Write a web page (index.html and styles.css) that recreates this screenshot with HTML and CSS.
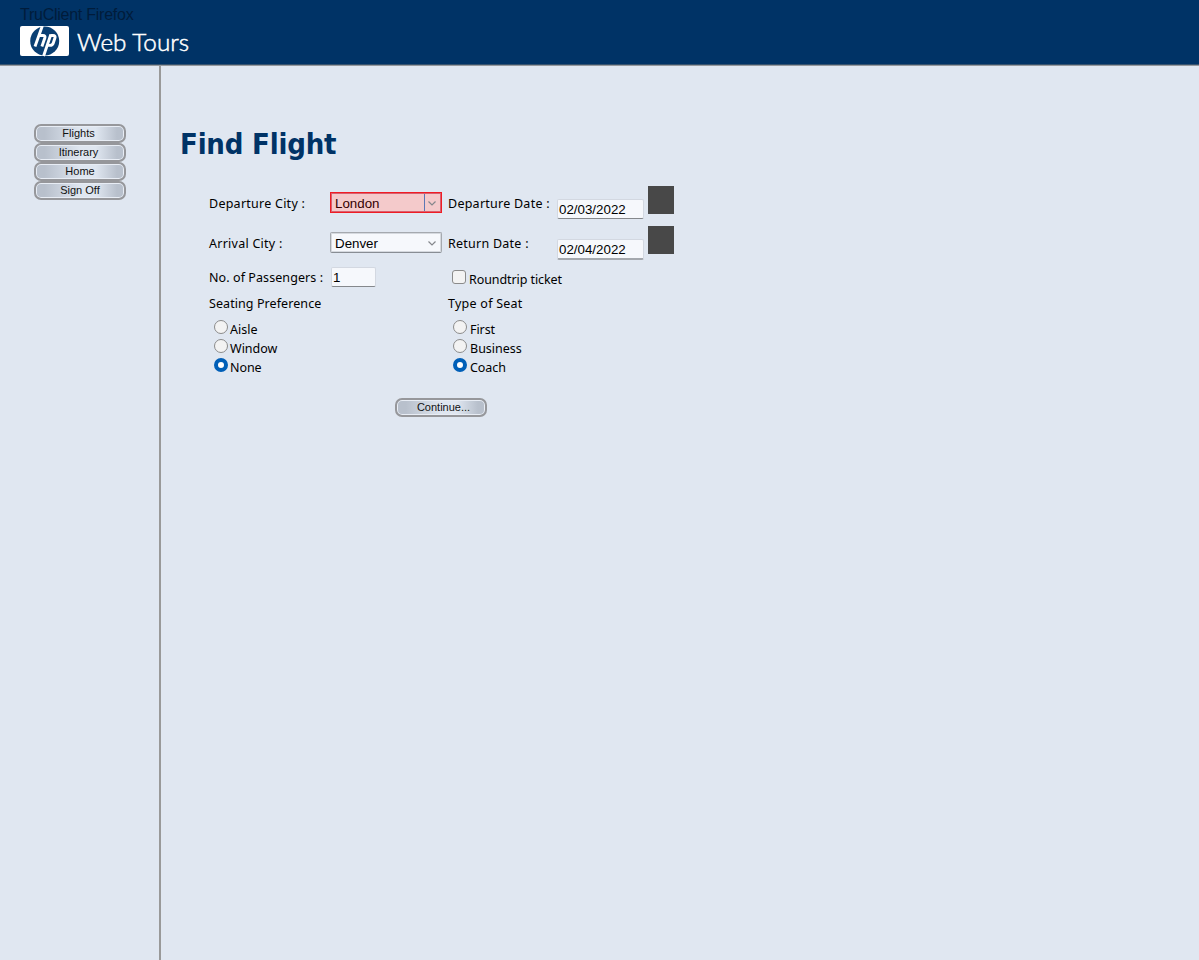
FILE: index.html
```html
<!DOCTYPE html>
<html lang="en">
<head>
<meta charset="utf-8">
<title>Web Tours</title>
<link rel="stylesheet" href="styles.css">
</head>
<body>
<header class="banner">
  <div class="script-name">TruClient Firefox</div>
  <svg class="logo" width="180" height="32" viewBox="0 0 180 32">
    <rect x="0" y="0" width="49" height="30" rx="2" fill="#fff"/>
    <circle cx="24.700" cy="15" r="14.500" fill="#0a3f73"/>
    <path d="M22.300 0 15 20.500M19.300 9.500H23q2.600 0 1.800 2.500L21.900 20.500M30.800 8.500 23.600 30M30.500 9.500H33q2.700 0 1.900 2.500l-1.600 5q-.8 2.400-3.300 2.400h-2.300" fill="none" stroke="#fff" stroke-width="2.900"/>
    <text class="brand" x="57" y="25" textLength="112" lengthAdjust="spacingAndGlyphs">Web Tours</text>
  </svg>
</header>
<div class="page">
  <nav class="side">
    <button class="pill"><span class="nudge">Flights</span></button>
    <button class="pill"><span class="nudge">Itinerary</span></button>
    <button class="pill">Home</button>
    <button class="pill">Sign Off</button>
  </nav>
  <main class="content">
    <h1 class="title">Find Flight</h1>
    <form class="form">
      <div class="row trip">
        <span class="label wide">Departure City :</span>
        <span class="select active">London<svg class="arrow" width="8" height="5" viewBox="0 0 8 5"><path d="M.5.5 4 4 7.500.5"/></svg></span>
        <span class="label wide">Departure Date :</span>
        <span class="field date">02/03/2022</span>
        <span class="calendar"></span>
      </div>
      <div class="row trip">
        <span class="label wide">Arrival City :</span>
        <span class="select">Denver<svg class="arrow" width="8" height="5" viewBox="0 0 8 5"><path d="M.5.5 4 4 7.500.5"/></svg></span>
        <span class="label wide">Return Date :</span>
        <span class="field date return">02/04/2022</span>
        <span class="calendar"></span>
      </div>
      <div class="row passengers">
        <span class="label pass">No. of Passengers :</span>
        <span class="field count">1</span>
        <span class="option"><i class="check"></i><span class="label snug">Roundtrip ticket</span></span>
      </div>
      <div class="row choices">
        <div class="group">
          <span class="label pass">Seating Preference</span>
          <div class="option first-option"><i class="radio"></i><span class="label">Aisle</span></div>
          <div class="option"><i class="radio"></i><span class="label">Window</span></div>
          <div class="option"><i class="radio on"></i><span class="label snug">None</span></div>
        </div>
        <div class="group">
          <span class="label wide">Type of Seat</span>
          <div class="option first-option"><i class="radio"></i><span class="label snug">First</span></div>
          <div class="option"><i class="radio"></i><span class="label">Business</span></div>
          <div class="option"><i class="radio on"></i><span class="label snug">Coach</span></div>
        </div>
      </div>
      <button class="pill continue" type="button">Continue...</button>
    </form>
  </main>
</div>
</body>
</html>
```
FILE: styles.css
```css
* { box-sizing: border-box; }
body { margin: 0; height: 960px; overflow: hidden; display: flex; flex-direction: column; background: #e0e7f1; color: #000; font: 12.500px/19px "Noto Sans", sans-serif; }
.banner { flex: none; height: 66px; padding: 6px 20px 0; background: #036; border-bottom: 1px solid #96999d; box-shadow: inset 0 -1px #36536f; }
.script-name { height: 20px; font: 16px/18px "Liberation Sans", sans-serif; letter-spacing: -.25px; color: #001c3b; }
.logo { display: block; }
.brand { font: 300 24px Lato, sans-serif; fill: #fff; stroke: #fff; stroke-width: .5px; }
.page { flex: 1; display: flex; }
.side { width: 161px; padding: 58px 0 0 34px; border-right: 2px solid #999; display: flex; flex-direction: column; }
.pill { flex: none; width: 92px; height: 19px; padding: 0 0 1px; border: 2px solid #96979b; border-radius: 7px; background: linear-gradient(90deg, #b8c0cc 10%, #dfe6f0 50%, #dfe6f0 68%, #b8c0cc 92%); box-shadow: inset 0 0 0 1px #e8edf5; font: 11px/14px "Liberation Sans", sans-serif; color: #111; }
.nudge { margin-right: 3px; }
.content { padding: 58px 0 0 19px; }
.title { margin: 0; height: 62px; padding-top: 1px; font: bold 29px/38px "DejaVu Sans Condensed", "DejaVu Sans", sans-serif; font-stretch: condensed; letter-spacing: -.2px; color: #036; white-space: nowrap; }
.form { padding-left: 29px; }
.row { display: grid; white-space: nowrap; }
.wide { letter-spacing: .25px; }
.pass { letter-spacing: .08px; }
.snug { letter-spacing: -.08px; }
.trip { grid-template-columns: 121px 118px 109px 91px 26px; height: 40px; }
.trip .label { padding-top: 8px; }
.select { display: flex; align-items: center; justify-content: space-between; width: 112px; height: 21px; margin-top: 6px; padding: 1px 5px 0 4px; border: 1px solid #a5a9af; border-bottom-color: #888d94; box-shadow: inset 0 0 0 1px #d5d9df; border-radius: 2px; background: #f6f8fc; font: 13.330px/17px "Liberation Sans", sans-serif; }
.active { border: 1px solid #f01c24; border-radius: 0; padding-top: 2px; background: linear-gradient(#5c77b5, #5c77b5) 93px 0 / 1px 100% no-repeat #f4cacb; box-shadow: inset 0 0 0 1px #d9606f; color: #300; }
.arrow { fill: none; stroke: #85878c; stroke-width: 1.2; }
.field { display: block; height: 20px; border: 1px solid #d3d8e1; border-bottom-color: #85888c; border-radius: 2px; background: #f6f8fc; padding-top: 1px; font: 13.330px/18px "Liberation Sans", sans-serif; }
.date { width: 87px; margin-top: 13px; padding-left: 1px; }
.return { border-bottom-width: 2px; border-bottom-color: #a4a8ae; height: 21px; }
.calendar { width: 26px; height: 28px; background: #484848; }
.passengers { grid-template-columns: 122px 121px 120px; height: 28px; }
.passengers .label { padding-top: 2px; }
.count { width: 45px; margin-top: 1px; padding-left: 1px; }
.option { display: flex; height: 19px; }
.check { width: 14px; height: 14px; margin: 4px 3px 0 0; border: 1px solid #8b8b8b; border-radius: 3px; background: #f3f3f3; }
.passengers .option .label { padding-top: 4px; }
.choices { grid-template-columns: 239px 240px; }
.group { display: flex; flex-direction: column; }
.first-option { margin-top: 7px; }
.radio { width: 14px; height: 14px; margin: 0 2px 0 5px; border: 1px solid #8b8b8b; border-radius: 50%; background: #f3f3f3; }
.group:last-child .radio { margin-right: 3px; }
.on { border: 4px solid #005fb8; background: #fff; }
.continue { display: block; margin: 21px 0 0 186px; padding-left: 5px; }
```
